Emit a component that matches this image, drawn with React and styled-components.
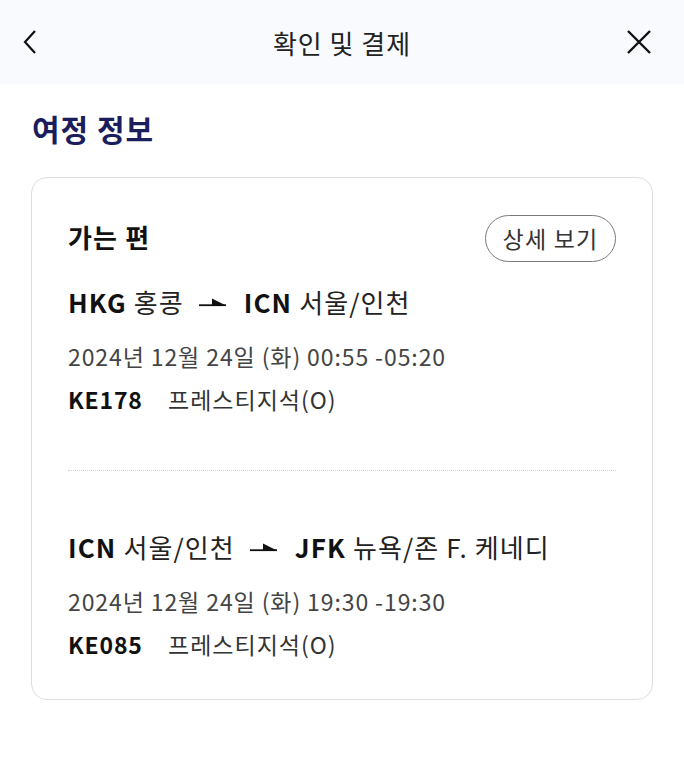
import React from "react";
import styled, { createGlobalStyle } from "styled-components";

const Global = createGlobalStyle`
  html, body { margin: 0; padding: 0; background: #fff; }
  body { font-family: "Noto Sans CJK KR", "Noto Sans", sans-serif; color: #111; }
  * { box-sizing: border-box; }
`;

const Page = styled.div`
  width: 684px;
  min-height: 761px;
  background: #fff;
`;

const Header = styled.header`
  height: 84px;
  background: #f9fafd;
  display: grid;
  grid-template-columns: 84px 1fr 84px;
  align-items: center;
`;

const IconBtn = styled.button`
  border: none;
  background: none;
  padding: 0;
  height: 84px;
  display: flex;
  align-items: center;
  justify-content: ${(p) => (p.$right ? "flex-end" : "flex-start")};
  padding-left: ${(p) => (p.$right ? "0" : "22px")};
  padding-right: ${(p) => (p.$right ? "32px" : "0")};
  color: #111;
`;

const Title = styled.h1`
  margin: 0;
  text-align: center;
  font-size: 26px;
  font-weight: 400;
  color: #222;
  letter-spacing: 1px;
`;

const Content = styled.main`
  padding: 22px 31px 0 31px;
`;

const SectionTitle = styled.h2`
  margin: 0 0 0 1px;
  font-size: 30px;
  line-height: 44px;
  font-weight: 700;
  color: #1c1d5c;
  letter-spacing: 1px;
`;

const Card = styled.section`
  margin-top: 27px;
  border: 1.5px solid #dedede;
  border-radius: 16px;
  padding: 37px 36px 39px 36px;
  width: 622px;
`;

const CardHead = styled.div`
  display: flex;
  align-items: center;
  justify-content: space-between;
`;

const CardTitle = styled.h3`
  margin: 0 0 4px 0;
  font-size: 26px;
  line-height: 36px;
  font-weight: 700;
  color: #111;
  letter-spacing: 1.2px;
`;

const DetailBtn = styled.button`
  width: 131px;
  height: 47px;
  border: 1.5px solid #7a7a7a;
  border-radius: 24px;
  background: #fff;
  font-family: inherit;
  font-size: 23px;
  color: #333;
  padding: 0 0 2px 0;
  letter-spacing: 1.2px;
`;

const Segment = styled.div`
  display: flex;
  flex-direction: column;
  padding-top: ${(p) => p.$top}px;
`;

const Route = styled.div`
  display: flex;
  align-items: center;
  font-size: 26px;
  line-height: 34px;
  color: #222;
  letter-spacing: 1.1px;
`;

const Code = styled.b`
  font-weight: 700;
  color: #111;
  margin-right: 7px;
`;

const Arrow = styled.svg`
  margin: 0 16px 0 14px;
  flex: none;
`;

const DateLine = styled.div`
  margin-top: 21px;
  font-size: 23px;
  line-height: 32px;
  color: #444;
  letter-spacing: 0.9px;
`;

const FlightLine = styled.div`
  margin-top: 11px;
  display: flex;
  font-size: 23px;
  line-height: 32px;
  color: #333;
  letter-spacing: 1px;
`;

const FlightNo = styled.b`
  font-weight: 700;
  color: #111;
  width: 100px;
  letter-spacing: 0.8px;
`;

const Divider = styled.hr`
  margin: 55px 0 0 0;
  border: none;
  border-top: 1.5px dotted #d6d6d6;
`;

const Plane = () => (
  <Arrow width="30" height="12" viewBox="0 0 30 12">
    <path d="M1 9.2 H28" stroke="#111" strokeWidth="1.8" />
    <path d="M14 2.5 L28 9.5 L14 9.5 Z" fill="#111" />
  </Arrow>
);

const segments = [
  {
    from: ["HKG", "홍콩"],
    to: ["ICN", "서울/인천"],
    date: "2024년 12월 24일 (화) 00:55 -05:20",
    no: "KE178",
    cls: "프레스티지석(O)",
  },
  {
    from: ["ICN", "서울/인천"],
    to: ["JFK", "뉴욕/존 F. 케네디"],
    date: "2024년 12월 24일 (화) 19:30 -19:30",
    no: "KE085",
    cls: "프레스티지석(O)",
  },
];

export default function App() {
  return (
    <Page>
      <Global />
      <Header>
        <IconBtn aria-label="back">
          <svg width="16" height="26" viewBox="0 0 16 26">
            <path d="M13 2 L3 13 L13 24" fill="none" stroke="#111" strokeWidth="2.2" />
          </svg>
        </IconBtn>
        <Title>확인 및 결제</Title>
        <IconBtn $right aria-label="close">
          <svg width="26" height="26" viewBox="0 0 26 26">
            <path d="M2 2 L24 24 M24 2 L2 24" fill="none" stroke="#111" strokeWidth="2.4" />
          </svg>
        </IconBtn>
      </Header>
      <Content>
        <SectionTitle>여정 정보</SectionTitle>
        <Card>
          <CardHead>
            <CardTitle>가는 편</CardTitle>
            <DetailBtn>상세 보기</DetailBtn>
          </CardHead>
          {segments.map((s, i) => (
            <React.Fragment key={s.no}>
              {i > 0 && <Divider />}
              <Segment $top={i === 0 ? 23 : 59}>
                <Route>
                  <Code>{s.from[0]}</Code>
                  {s.from[1]}
                  <Plane />
                  <Code>{s.to[0]}</Code>
                  {s.to[1]}
                </Route>
                <DateLine>{s.date}</DateLine>
                <FlightLine>
                  <FlightNo>{s.no}</FlightNo>
                  {s.cls}
                </FlightLine>
              </Segment>
            </React.Fragment>
          ))}
        </Card>
      </Content>
    </Page>
  );
}
